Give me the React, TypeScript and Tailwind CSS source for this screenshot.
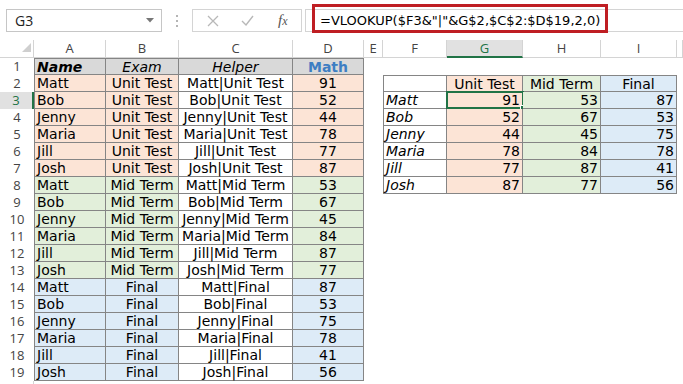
import clsx from "clsx";

type Group = { exam: string; fill: string; scores: number[] };

const NAMES = ["Matt", "Bob", "Jenny", "Maria", "Jill", "Josh"];

const GROUPS: Group[] = [
  { exam: "Unit Test", fill: "bg-[#fce4d6]", scores: [91, 52, 44, 78, 77, 87] },
  { exam: "Mid Term", fill: "bg-[#e2efda]", scores: [53, 67, 45, 84, 87, 77] },
  { exam: "Final", fill: "bg-[#ddebf7]", scores: [87, 53, 75, 78, 41, 56] },
];

const LETTERS = ["A", "B", "C", "D", "E", "F", "G", "H", "I", ""];

// 表の罫線
const LINE = "border-[#858585]";
const UI_FONT = "font-['Open_Sans',sans-serif] text-[13px] text-[#444]";

interface CellSpec {
  text?: string;
  cls?: string;
}

function leftTable(row: number, col: number): CellSpec | null {
  // A..D, rows 1..19
  if (col > 3 || row > 19) return null;
  const edge = clsx("border-r border-b", LINE, col === 0 && "border-l", row === 1 && "border-t");

  if (row === 1) {
    const heads = [
      { text: "Name", cls: "font-bold italic text-left" },
      { text: "Exam", cls: "italic text-center" },
      { text: "Helper", cls: "italic text-center" },
      { text: "Math", cls: "font-bold text-center text-[#3d7ec3]" },
    ];
    return { text: heads[col].text, cls: clsx(edge, "bg-[#d9d9d9]", heads[col].cls) };
  }

  const i = row - 2;
  const g = GROUPS[Math.floor(i / 6)];
  const name = NAMES[i % 6];
  switch (col) {
    case 0:
      return { text: name, cls: clsx(edge, g.fill, "text-left") };
    case 1:
      return { text: g.exam, cls: clsx(edge, g.fill, "text-center") };
    case 2:
      return { text: `${name}|${g.exam}`, cls: clsx(edge, "bg-white text-center") };
    default:
      return { text: String(g.scores[i % 6]), cls: clsx(edge, g.fill, "text-center") };
  }
}

function rightTable(row: number, col: number): CellSpec | null {
  // F..I, rows 2..8
  if (col < 5 || col > 8 || row < 2 || row > 8) return null;
  const edge = clsx("border-r border-b", LINE, col === 5 && "border-l", row === 2 && "border-t");
  const g = col === 5 ? null : GROUPS[col - 6];

  if (row === 2) {
    if (!g) return { cls: clsx(edge, "bg-white") };
    return { text: g.exam, cls: clsx(edge, g.fill, "text-center") };
  }
  const n = row - 3;
  if (!g) return { text: NAMES[n], cls: clsx(edge, "bg-white italic text-left") };
  return { text: String(g.scores[n]), cls: clsx(edge, g.fill, "text-right") };
}

function SelectionBox() {
  return (
    <div className="pointer-events-none absolute -left-px -top-px right-[-2px] bottom-[-1px] border-2 border-[#217346]">
      <div className="absolute -bottom-[4px] -right-[4px] h-[6px] w-[6px] border border-white bg-[#217346]" />
    </div>
  );
}

function FormulaBar() {
  return (
    <div className="flex h-[40px] items-start bg-white pl-[6px] pt-[9px]">
      {/* 名前ボックス */}
      <div className="flex h-[23px] w-[156px] items-center justify-between border border-[#c6c6c6] pl-[8px] pr-[7px] font-['Open_Sans',sans-serif] text-[14px] text-[#222]">
        <span>G3</span>
        <svg width="8" height="5" viewBox="0 0 8 5">
          <path d="M0 0h8L4 4.5z" fill="#777" />
        </svg>
      </div>
      <div className="flex h-[23px] w-[30px] flex-col items-center justify-center gap-[3px]">
        <span className="h-[2px] w-[2px] bg-[#b5b5b5]" />
        <span className="h-[2px] w-[2px] bg-[#b5b5b5]" />
        <span className="h-[2px] w-[2px] bg-[#b5b5b5]" />
      </div>
      <div className="flex h-[23px] w-[110px] items-center border border-[#d4d4d4] pl-[14px]">
        <svg width="12" height="12" viewBox="0 0 12 12" className="mr-[22px]">
          <path d="M1 1l10 10M11 1L1 11" stroke="#b8b8b8" strokeWidth="1.3" />
        </svg>
        <svg width="13" height="11" viewBox="0 0 13 11" className="mr-[24px]">
          <path d="M1 6l4 4 7-9" stroke="#b8b8b8" strokeWidth="1.4" fill="none" />
        </svg>
        <span className="font-['Liberation_Serif',serif] text-[15px] italic leading-none text-[#555]">
          f<span className="text-[12px]">x</span>
        </span>
      </div>
      <div className="relative ml-[3px] flex h-[23px] flex-1 items-center border-y border-l border-[#d4d4d4] pl-[14px] font-['DejaVu_Sans',sans-serif] text-[13px] text-black">
        <div className="pointer-events-none absolute left-[6px] top-[-6px] h-[29px] w-[296px] border-[3px] border-[#bf1e23]" />
        <span className="whitespace-nowrap">=VLOOKUP($F3&"|"&G$2,$C$2:$D$19,2,0)</span>
      </div>
    </div>
  );
}

export default function App() {
  const rows = Array.from({ length: 20 }, (_, i) => i + 1);

  return (
    <div className="h-[384px] w-[683px] overflow-hidden bg-white">
      <FormulaBar />

      <div className="grid grid-cols-[34px_72px_73px_114px_71px_19px_64px_76px_78px_76px_1fr] grid-rows-[18px_repeat(20,17px)] font-['DejaVu_Sans',sans-serif] text-[14px] text-black">
        {/* 列見出し */}
        <div className="relative border-r border-b border-[#d4d4d4]">
          <svg width="9" height="9" viewBox="0 0 9 9" className="absolute bottom-[5px] right-[2px]">
            <path d="M9 0v9H0z" fill="#cfcfcf" />
          </svg>
        </div>
        {LETTERS.map((l, c) => (
          <div
            key={"h" + c}
            className={clsx(
              "flex items-center justify-center border-r border-[#d4d4d4] leading-none",
              UI_FONT,
              c === 6 ? "border-b-2 border-b-[#217346] bg-[#e1e1e1] text-[#217346]" : "border-b border-b-[#d4d4d4]"
            )}
          >
            {l}
          </div>
        ))}

        {rows.map((r) => (
          <div key={r} className="contents">
            <div
              className={clsx(
                "flex items-center justify-center leading-none",
                UI_FONT,
                r === 3 && "border-r-2 border-[#217346] bg-[#e1e1e1] text-[#217346]",
                r === 20 && "border-r border-[#d4d4d4]"
              )}
            >
              {r < 20 ? r : ""}
            </div>
            {LETTERS.map((_, c) => {
              const spec = leftTable(r, c) ?? rightTable(r, c);
              return (
                <div
                  key={c}
                  className={clsx(
                    "relative overflow-visible whitespace-nowrap px-[2px] leading-[16px]",
                    spec?.cls
                  )}
                >
                  {spec?.text}
                  {r === 3 && c === 6 && <SelectionBox />}
                </div>
              );
            })}
          </div>
        ))}
      </div>
    </div>
  );
}
